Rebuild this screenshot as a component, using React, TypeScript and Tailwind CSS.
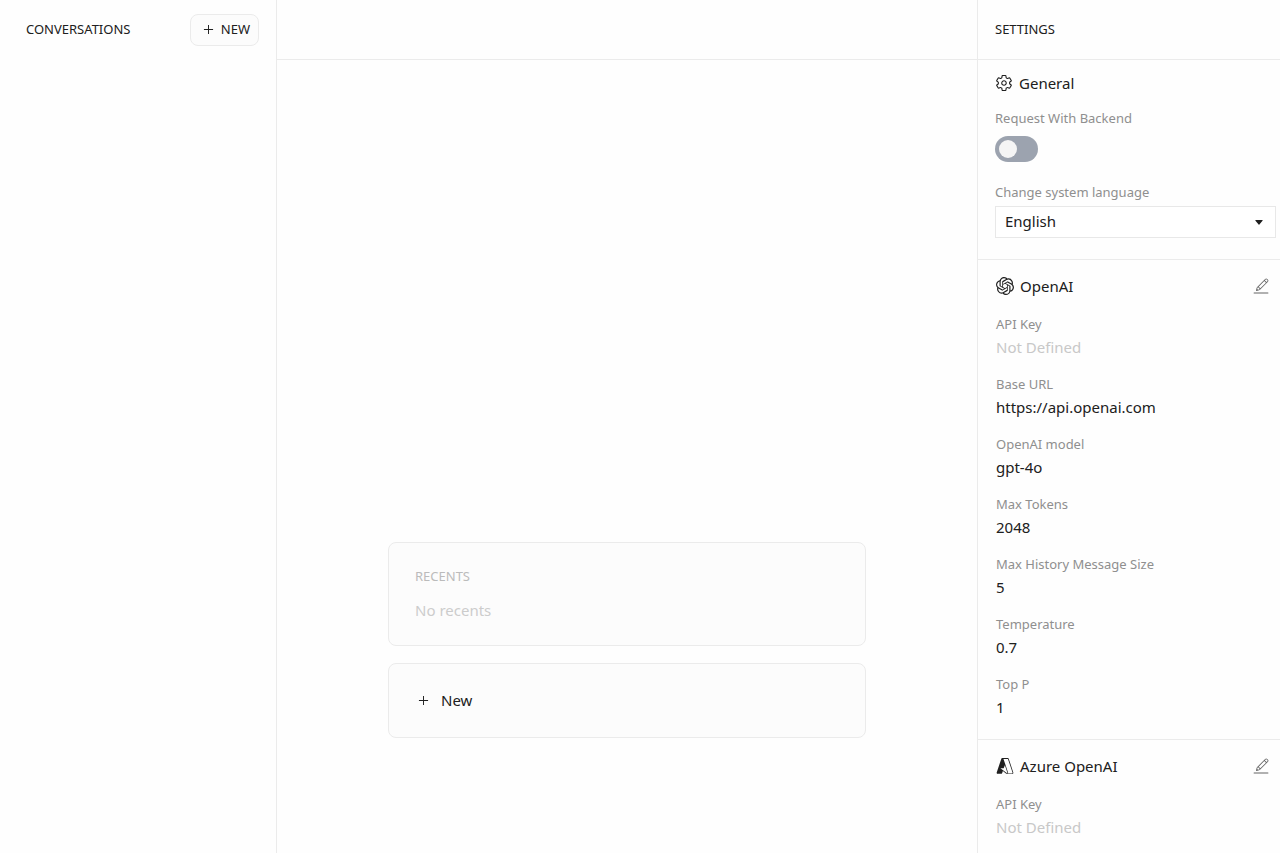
import { useState, type ReactNode } from "react";
import { AiOutlinePlus } from "react-icons/ai";
import { CiEdit } from "react-icons/ci";
import { IoSettingsOutline } from "react-icons/io5";
import { SiOpenai } from "react-icons/si";
import { VscAzure } from "react-icons/vsc";

type Field = { label: string; value?: string };

const openAIFields: Field[] = [
  { label: "API Key" },
  { label: "Base URL", value: "https://api.openai.com" },
  { label: "OpenAI model", value: "gpt-4o" },
  { label: "Max Tokens", value: "2048" },
  { label: "Max History Message Size", value: "5" },
  { label: "Temperature", value: "0.7" },
  { label: "Top P", value: "1" },
];

const azureFields: Field[] = [{ label: "API Key" }];

function Conversations() {
  return (
    <aside className="w-[277px] shrink-0 border-r border-[#ebebeb]">
      <header className="flex h-[59px] items-center justify-between pr-[17px] pl-[26px]">
        <h2 className="text-[13px]">CONVERSATIONS</h2>
        <button className="flex h-8 items-center gap-[6px] rounded-lg border border-[#ebebeb] bg-[#fcfcfc] pr-2 pl-[11px] text-[13px]">
          <AiOutlinePlus className="size-[13px]" />
          NEW
        </button>
      </header>
    </aside>
  );
}

function Welcome() {
  return (
    <main className="flex min-w-0 flex-1 flex-col">
      <header className="h-[60px] shrink-0 border-b border-[#ebebeb]" />
      <div className="flex flex-1 flex-col items-center justify-end gap-[17px] px-4 pb-[115px]">
        <section className="w-full max-w-[478px] rounded-lg border border-[#ebebeb] bg-[#fcfcfc] px-[26px] pt-[23px] pb-[22px]">
          <h3 className="text-[13px] leading-5 text-[#bbb]">RECENTS</h3>
          <p className="mt-[11px] leading-[26px] text-[#ccc]">No recents</p>
        </section>
        <button className="flex w-full max-w-[478px] items-center gap-[11px] rounded-lg border border-[#ebebeb] bg-[#fcfcfc] px-7 py-6 leading-[25px]">
          <AiOutlinePlus className="size-[13px]" />
          New
        </button>
      </div>
    </main>
  );
}

function ProviderSection({ icon, name, fields }: { icon: ReactNode; name: string; fields: Field[] }) {
  return (
    <section className="border-b border-[#ebebeb] pt-[13px] pr-[9px] pb-[19px] pl-[18px]">
      <div className="flex h-[26px] items-center justify-between">
        <h3 className="flex items-center gap-[6px]">
          {icon}
          {name}
        </h3>
        <button aria-label={`Edit ${name}`} className="text-[#646464]">
          <CiEdit className="size-5" />
        </button>
      </div>
      <dl className="mt-[15px] flex flex-col gap-[14px]">
        {fields.map((field) => (
          <div key={field.label}>
            <dt className="text-[13px] leading-5 text-[#8f8f8f]">{field.label}</dt>
            <dd className={field.value ? "leading-[26px]" : "leading-[26px] text-[#c8c8c8]"}>
              {field.value ?? "Not Defined"}
            </dd>
          </div>
        ))}
      </dl>
    </section>
  );
}

function Settings() {
  const [backend, setBackend] = useState(false);
  const [lang, setLang] = useState("en");

  return (
    <aside className="flex w-[303px] shrink-0 flex-col border-l border-[#ebebeb]">
      <header className="flex h-[60px] shrink-0 items-center border-b border-[#ebebeb] px-[17px]">
        <h2 className="text-[13px]">SETTINGS</h2>
      </header>
      <div className="min-h-0 flex-1 overflow-hidden">
        <section className="border-b border-[#ebebeb] pt-[10px] pr-1 pb-[21px] pl-[17px]">
          <h3 className="flex h-[26px] items-center gap-[6px]">
            <IoSettingsOutline className="size-[18px]" />
            General
          </h3>
          <label htmlFor="backend" className="mt-3 block text-[13px] leading-5 text-[#8f8f8f]">
            Request With Backend
          </label>
          <input
            id="backend"
            type="checkbox"
            role="switch"
            checked={backend}
            onChange={(e) => setBackend(e.target.checked)}
            className="mt-2 flex h-[26px] w-[43px] appearance-none items-center rounded-full bg-[#9ca3af] px-1 before:size-[18px] before:rounded-full before:bg-[#f5f5f5] checked:justify-end checked:bg-[#30a46c]"
          />
          <label htmlFor="language" className="mt-5 block text-[13px] leading-5 text-[#8f8f8f]">
            Change system language
          </label>
          <div className="relative mt-1">
            <select
              id="language"
              value={lang}
              onChange={(e) => setLang(e.target.value)}
              className="h-8 w-full appearance-none border border-[#e8e8e8] bg-white px-[9px] pb-px"
            >
              <option value="en">English</option>
              <option value="fr">Français</option>
            </select>
            <svg viewBox="0 0 8 5" className="pointer-events-none absolute top-[14px] right-[13px] h-[5px] w-2" fill="currentColor">
              <path d="M.8 0h6.4q.9 0 .3.7L4.4 4.6q-.4.4-.8 0L.5.7Q-.1 0 .8 0z" />
            </svg>
          </div>
        </section>
        <ProviderSection icon={<SiOpenai className="size-[18px]" />} name="OpenAI" fields={openAIFields} />
        <ProviderSection icon={<VscAzure className="size-[18px]" />} name="Azure OpenAI" fields={azureFields} />
      </div>
    </aside>
  );
}

export default function App() {
  return (
    <div className="flex h-screen overflow-hidden bg-[#fefefe] font-['Noto_Sans',sans-serif] text-[15px] text-[#202020]">
      <Conversations />
      <Welcome />
      <Settings />
    </div>
  );
}
